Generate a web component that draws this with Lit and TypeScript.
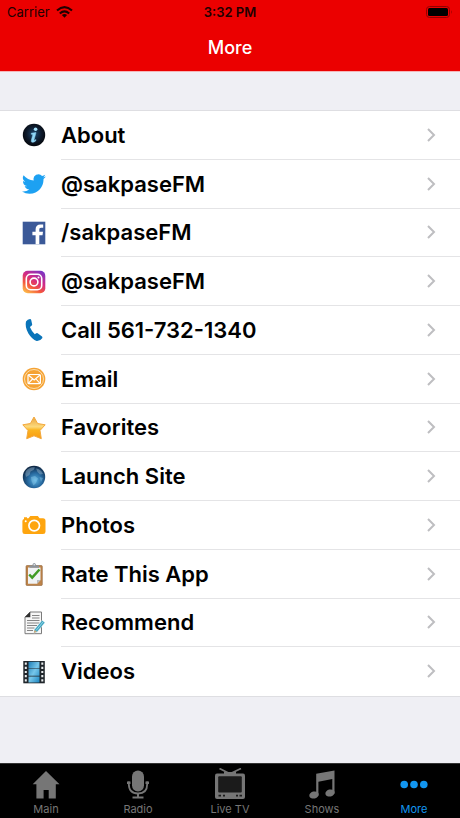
import { LitElement, html, css, svg, type SVGTemplateResult } from "lit";
import { customElement, property, state } from "lit/decorators.js";
import { classMap } from "lit/directives/class-map.js";

const rowIcons: Record<string, SVGTemplateResult> = {
  about: svg`
    <defs><radialGradient id="g" cx=".5" cy=".45" r=".55"><stop offset="0" stop-color="#1f4a72"/><stop offset=".6" stop-color="#0d1a2c"/><stop offset="1" stop-color="#05070c"/></radialGradient></defs>
    <circle cx="12" cy="12" r="11.2" fill="url(#g)"/>
    <circle cx="13.6" cy="6.2" r="1.8" fill="#a5e2fb"/>
    <path d="M9.4 10.2 L14 9.6 L12 17 Q12 18 14 16.6 L13.6 18 Q11.6 19.8 9.8 19.2 Q8.9 18.6 9.4 17 L10.9 11.4 L9.2 11.2Z" fill="#8fd6f7" stroke="#8fd6f7" stroke-width=".5"/>`,
  twitter: svg`<path fill="#1da1f2" d="M23.9 4.6a10 10 0 0 1-2.8.8 4.9 4.9 0 0 0 2.1-2.7 9.9 9.9 0 0 1-3.1 1.2 4.9 4.9 0 0 0-8.4 4.5A14 14 0 0 1 1.6 3.2 4.9 4.9 0 0 0 3.2 9.7a4.9 4.9 0 0 1-2.2-.6v.1a4.9 4.9 0 0 0 3.9 4.8 4.9 4.9 0 0 1-2.2.1 4.9 4.9 0 0 0 4.6 3.4A9.9 9.9 0 0 1 0 19.5a14 14 0 0 0 7.5 2.2c9.1 0 14-7.5 14-14v-.6a10 10 0 0 0 2.4-2.500z"/>`,
  facebook: svg`<rect x=".7" y=".7" width="22.6" height="22.6" fill="#3b5998"/>
    <path fill="#fff" d="M13.6 23.3v-9h-3.2v-3.5h3.2V8.2c0-3.2 1.9-4.8 4.8-4.8 1.3 0 2.4.1 2.8.2v3.2h-2c-1.6 0-1.9.8-1.9 1.9v2.1h3.7l-.5 3.5h-3.2v9z"/>`,
  instagram: svg`
    <defs>
      <linearGradient id="g" x1=".2" y1="1" x2=".8" y2="0"><stop offset="0" stop-color="#fdb94a"/><stop offset=".3" stop-color="#f4573c"/><stop offset=".6" stop-color="#d32a85"/><stop offset="1" stop-color="#7b35c6"/></linearGradient>
    </defs>
    <rect x=".7" y=".7" width="22.6" height="22.6" rx="5" fill="url(#g)"/>
    <rect x="4.3" y="4.3" width="15.4" height="15.4" rx="4.3" fill="none" stroke="#fff" stroke-width="1.6"/>
    <circle cx="12" cy="12" r="3.9" fill="none" stroke="#fff" stroke-width="1.6"/>
    <circle cx="16.5" cy="7.5" r="1" fill="#fff"/>`,
  phone: svg`<path fill="#0a74b9" d="M4 3.500 Q5.500 1 8 .9 Q9 1 9.200 2 L10.200 6.600 Q10.200 7.600 9.200 8 L7.900 9 Q9.500 13 12.800 16.200 L14.200 15.300 Q15.200 14.700 16 15.400 L20 18.600 Q20.800 19.300 20.200 20.200 Q18 23.300 14.600 23 Q10.200 21.500 6.400 15.500 Q2.700 8.800 4 3.500Z"/>`,
  email: svg`<circle cx="12" cy="12" r="11.3" fill="#f5a233"/><circle cx="12" cy="12" r="9.5" fill="none" stroke="#fde3b8" stroke-width=".9"/>
    <rect x="6" y="7.5" width="12.4" height="9.2" rx="1" fill="#f8a53a" stroke="#fff" stroke-width="1.2"/>
    <path d="M6.300 8 L12.200 13 L18 8 M6.300 16.400 L10.500 12 M18 16.400 L14 12" fill="none" stroke="#fff" stroke-width="1.1"/>`,
  star: svg`<defs><linearGradient id="g" x1="0" y1="0" x2="0" y2="1"><stop offset="0" stop-color="#e9a33d"/><stop offset=".45" stop-color="#fcd97b"/><stop offset=".6" stop-color="#fbb41f"/><stop offset="1" stop-color="#f99b12"/></linearGradient></defs>
    <path fill="url(#g)" stroke="#f3a93f" stroke-width="1" stroke-linejoin="round" d="M12 1 L15.600 7.500 L23.200 8.800 L18 14.500 L19.300 22.700 L12 19.800 L4.700 22.700 L6 14.500 L.8 8.800 L8.400 7.500Z"/>`,
  globe: svg`<defs><radialGradient id="g" cx=".55" cy=".65" r=".65"><stop offset="0" stop-color="#58b0e0"/><stop offset=".5" stop-color="#27699f"/><stop offset="1" stop-color="#0d2440"/></radialGradient></defs>
    <circle cx="12" cy="12" r="11.2" fill="url(#g)"/>
    <path d="M4 6 Q8 1.500 13 2.500 L11.500 5 L8.500 6.500 L7.500 10 L4 12 Q2.500 9 4 6Z M14 3.500 Q19 4 21 9 L18 9.500 L15.500 7Z" fill="#a9c6da" opacity=".4"/>
    <path d="M9 12 L13 11 L16 13.500 L14 18 L11.500 20.500 L9.500 16Z M17.500 12 L21 13 L19 17Z" fill="#a5dcf5" opacity=".35"/>`,
  camera: svg`<path fill="#fea50f" d="M2 6 V4.200 H5 V5.300 H6.500 L8.300 3 H15.800 L17.600 5.300 H21 Q23.500 5.300 23.500 8 V18.700 Q23.500 21 21 21 H2.800 Q.4 21 .4 18.700 V8 Q.4 6.400 2 6Z"/>
    <circle cx="12.2" cy="12.6" r="5.3" fill="none" stroke="#fff" stroke-width="1.7"/><circle cx="3.7" cy="8.3" r="1" fill="#fff"/>`,
  clipboard: svg`<rect x="4" y="3.5" width="16.3" height="20" rx="1" fill="#bd8348" stroke="#8f633a" stroke-width=".6"/>
    <path d="M6 5.500 H18.500 V18 L15 21.700 H6Z" fill="#f0f2f4"/><path d="M18.500 18 H15 V21.700Z" fill="#b7babd"/>
    <path d="M7.500 5.800 V3.500 H10.300 Q10.500 1 12.200 1 Q13.900 1 14.100 3.500 H17 V5.800Z" fill="#8c939b"/><circle cx="12.2" cy="2.8" r=".7" fill="#fff"/>
    <path d="M7.200 12.500 L10.200 15.600 L17.500 7.500" fill="none" stroke="#419b25" stroke-width="2.5"/>`,
  note: svg`<path d="M8 1 H19.500 V22.700 H3 V6Z" fill="#f7f7f7" stroke="#7b7b7b"/><path d="M8.300 .8 V6.300 H2.800Z" fill="#303030"/>
    <path d="M10 4.500 H17.500 M10 7 H17.500 M5 9.500 H17.500 M5 12 H17.500 M5 14.500 H15 M5 17 H12.500 M5 19.500 H11" stroke="#858585" stroke-width="1.2"/>
    <path d="M12.200 18.700 L20.100 9.200 L23 11.600 L15.300 20.900 L11.800 22Z" fill="#42a6c2" stroke="#fff" stroke-width=".5"/><path d="M14 19.500 L21 11" stroke="#a7e2ef" stroke-width=".8"/><path d="M11.800 22 L12.600 18.900 L14.800 20.700Z" fill="#d5aa75"/>`,
  film: svg`<defs><linearGradient id="g" x1="0" y1="0" x2="1" y2="1"><stop offset="0" stop-color="#1d7db6"/><stop offset=".5" stop-color="#76c6ea"/><stop offset="1" stop-color="#1c86c2"/></linearGradient></defs>
    <rect x="1.3" y="1" width="21.5" height="22.3" fill="#20262b"/>
    <path d="M6.500 1.800 H17.500 V8 H6.500Z M6.500 8.600 H17.500 V15.800 H6.500Z M6.500 16.400 H17.500 V22.500 H6.500Z" fill="url(#g)"/>
    <path d="M3.800 2.500 V23 M20.300 2.500 V23" stroke="#e9edef" stroke-width="2" stroke-dasharray="2.2 2"/>`,
};

const tabIcons: Record<string, SVGTemplateResult> = {
  home: svg`<path fill="currentColor" d="M16 3 L29.500 16.200 H25.800 V30.500 H18.700 V22 H13.600 V30.500 H6.400 V16.200 H2.700Z"/>`,
  mic: svg`<g fill="none" stroke="currentColor" stroke-width="1.8"><path d="M6.800 13.500 V16 Q6.800 25.500 16 25.500 Q25.200 25.500 25.200 16 V13.500"/><path d="M16 25.500 V30 M10.500 29.500 H21.500" stroke-width="2"/></g><path d="M5 13.500 H8.500 V16 H5Z M23.500 13.500 H27 V16 H23.500Z" fill="currentColor"/><rect x="10" y="2.5" width="12" height="21" rx="6" fill="currentColor"/>`,
  tv: svg`<path d="M5.500 .5 L16 5.700 L27 .5" fill="none" stroke="currentColor" stroke-width="1.7"/><rect x="10" y="4" width="12" height="3" fill="currentColor"/>
    <rect x="1" y="5.5" width="30" height="25.5" rx="2" fill="currentColor"/><rect x="4.2" y="8.2" width="23.6" height="16.300" rx="1" fill="#1b1b1b"/>
    <path d="M4.500 27.700 H7 M9 27.700 H11 M22 27.700 H24 M25.500 27.700 H28" stroke="#1b1b1b" stroke-width="1.8"/>`,
  music: svg`<path d="M10.200 5.800 L28.500 2.500 V25.500 H26.300 V11 L12.400 13.700 V27.500 H10.200Z" fill="currentColor"/><ellipse cx="8" cy="27" rx="4.8" ry="3.500" transform="rotate(-15 8 27)" fill="currentColor"/><ellipse cx="24" cy="25" rx="4.7" ry="3.500" transform="rotate(-15 24 25)" fill="currentColor"/>`,
  more: svg`<g fill="currentColor"><circle cx="6.2" cy="16.500" r="3.800"/><circle cx="16" cy="16.500" r="3.800"/><circle cx="25.800" cy="16.500" r="3.800"/></g>`,
};

@customElement("menu-row")
class MenuRow extends LitElement {
  @property() icon = "";
  @property() label = "";
  @property() href = "#";

  static styles = css`
    :host { display: flex; min-height: 44px; }
    .row { flex: 1; display: flex; align-items: stretch; padding-left: 22px; gap: 15px; color: #000; text-decoration: none; }
    .icon { flex: none; width: 24px; height: 24px; align-self: center; }
    .content { flex: 1; display: flex; align-items: center; justify-content: space-between; padding-right: 22px; border-bottom: 1px solid #e4e4e6; font-size: 22px; font-weight: 600; line-height: 28px; }
    :host(:last-child) .content { border-bottom-color: transparent; }
    .chevron { flex: none; width: 14px; height: 16px; }
  `;

  render() {
    return html`<a class="row" href=${this.href}>
      <svg class="icon" viewBox="0 0 24 24" aria-hidden="true">${rowIcons[this.icon]}</svg>
      <span class="content">${this.label}
        <svg class="chevron" viewBox="0 0 14 16" aria-hidden="true"><path d="M4 2 L10 8 L4 14" fill="none" stroke="#bebec1" stroke-width="2"/></svg>
      </span>
    </a>`;
  }
}

@customElement("app-root")
class AppRoot extends LitElement {
  @state() private active = "More";

  private items = [
    ["about", "About", "#about"],
    ["twitter", "@sakpaseFM", "#twitter"],
    ["facebook", "/sakpaseFM", "#facebook"],
    ["instagram", "@sakpaseFM", "#instagram"],
    ["phone", "Call 561-732-1340", "tel:561-732-1340"],
    ["email", "Email", "#email"],
    ["star", "Favorites", "#favorites"],
    ["globe", "Launch Site", "#site"],
    ["camera", "Photos", "#photos"],
    ["clipboard", "Rate This App", "#rate"],
    ["note", "Recommend", "#recommend"],
    ["film", "Videos", "#videos"],
  ];

  private tabs = [
    ["home", "Main"],
    ["mic", "Radio"],
    ["tv", "Live TV"],
    ["music", "Shows"],
    ["more", "More"],
  ];

  static styles = css`
    :host { display: flex; flex-direction: column; min-height: 100vh; background: #efeff4; font-family: Inter, "Liberation Sans", sans-serif; }
    .header { background: #eb0000; border-bottom: 1px solid #f5b5b8; }
    .status { display: grid; grid-template-columns: 1fr auto 1fr; align-items: center; height: 24px; padding: 0 7px; font-size: 13px; line-height: 16px; color: #210000; }
    .carrier { display: flex; align-items: center; gap: 6px; }
    .wifi { width: 17px; height: 12px; }
    .time { font-weight: 600; }
    .battery { width: 27px; height: 12px; justify-self: end; }
    .title { margin: 0; font-size: 18px; font-weight: 500; line-height: 47px; text-align: center; color: #fff; }
    .main { flex: 1; display: flex; flex-direction: column; padding: 38px 0 66px; }
    .list { flex: 1; display: grid; grid-auto-rows: 1fr; background: #fff; border-top: 1px solid #dedee2; border-bottom: 1px solid #dedee2; }
    .tabs { display: grid; grid-template-columns: repeat(5, 1fr); background: #000; border-top: 1px solid #333; }
    .tab { display: flex; flex-direction: column; align-items: center; gap: 1px; padding: 4px 0 1px; border: 0; background: none; color: #767676; font-family: inherit; font-size: 11px; line-height: 16px; }
    .tab.active { color: #1296f0; }
    .glyph { width: 32px; height: 32px; }
  `;

  render() {
    return html`
      <header class="header">
        <div class="status">
          <span class="carrier">Carrier
            <svg class="wifi" viewBox="0 0 17 12" aria-label="Wi-Fi"><g fill="none" stroke="#210000" stroke-width="2.2"><path d="M1 4.500 Q8.500 -2.200 16 4.500"/><path d="M3.800 7.500 Q8.500 3.300 13.200 7.500"/></g><path d="M5.900 9 Q8.500 7 11.100 9 L8.500 11.800Z" fill="#210000"/></svg>
          </span>
          <span class="time">3:32 PM</span>
          <svg class="battery" viewBox="0 0 27 12" aria-label="Battery"><rect x=".5" y=".5" width="23" height="11" rx="3" fill="none" stroke="#930000"/><rect x="2" y="2" width="20" height="8" rx="1.5" fill="#000"/><path d="M25 4 Q26.500 6 25 8Z" fill="#930000"/></svg>
        </div>
        <h1 class="title">More</h1>
      </header>
      <main class="main">
        <div class="list">
          ${this.items.map(([icon, label, href]) => html`<menu-row .icon=${icon} .label=${label} .href=${href}></menu-row>`)}
        </div>
      </main>
      <nav class="tabs">
        ${this.tabs.map(([icon, label]) => html`
          <button class=${classMap({ tab: true, active: this.active === label })} @click=${() => { this.active = label; }}>
            <svg class="glyph" viewBox="0 0 32 32" aria-hidden="true">${tabIcons[icon]}</svg>
            ${label}
          </button>`)}
      </nav>`;
  }
}
